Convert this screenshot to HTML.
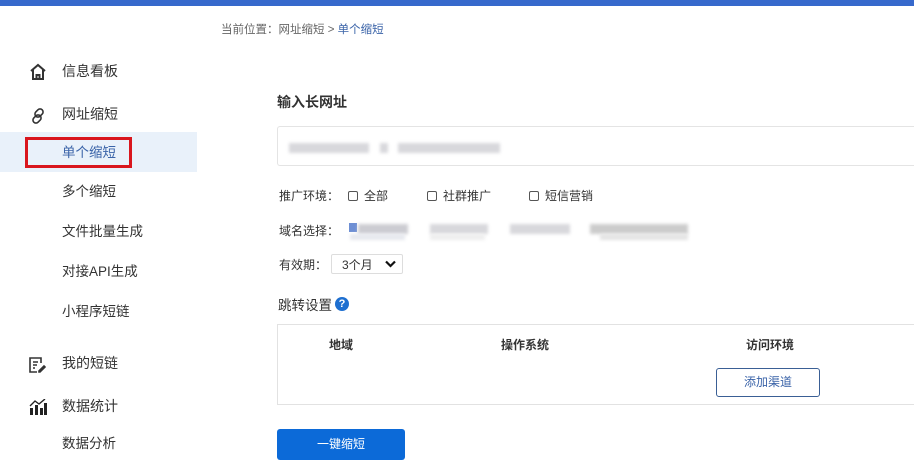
<!DOCTYPE html>
<html><head><meta charset="utf-8"><style>
*{margin:0;padding:0;box-sizing:border-box}
body{width:914px;height:476px;overflow:hidden;background:#fff;font-family:"Liberation Sans","Noto Sans CJK SC",sans-serif;color:#333;position:relative}
.a{position:absolute;white-space:nowrap}
.top{left:0;top:0;width:914px;height:6px;background:#3769cc}
.nav{font-size:14px;color:#333}
.sub{font-size:13.5px;color:#333}
.f{font-size:12px;color:#333}
.blur{position:absolute;height:10px;background:#d8d8dc;filter:blur(1.5px)}
.cb{display:inline-block;width:10px;height:10px;border:1px solid #555;border-radius:2px;vertical-align:-1px;margin-right:6px}
</style></head><body>
<div class="a top"></div>
<div class="a" style="left:221px;top:21px;font-size:11.5px;color:#666">当前位置：网址缩短 &gt; <span style="color:#3a63a8">单个缩短</span></div>

<svg class="a" style="left:29px;top:63px" width="18" height="18" viewBox="0 0 18 18"><path d="M2 8 L9 2 L16 8 M4 6.5 V16 H14 V6.5 M7.5 16 V12 H10.5 V16" fill="none" stroke="#333" stroke-width="2"/></svg>
<div class="a nav" style="left:62px;top:61px">信息看板</div>
<svg class="a" style="left:29px;top:107px" width="18" height="18" viewBox="0 0 18 18"><g fill="none" stroke="#333" stroke-width="1.6"><rect x="7" y="1.5" width="6" height="9" rx="3" transform="rotate(45 10 6)"/><rect x="5" y="7.5" width="6" height="9" rx="3" transform="rotate(45 8 12)"/></g></svg>
<div class="a nav" style="left:62px;top:104px">网址缩短</div>
<div class="a" style="left:0;top:132px;width:197px;height:40px;background:#e9f1fa"></div>
<div class="a" style="left:25px;top:137px;width:107px;height:31px;border:3px solid #d9161d"></div>
<div class="a sub" style="left:62px;top:141px;color:#3a63a8">单个缩短</div>
<div class="a sub" style="left:62px;top:180px">多个缩短</div>
<div class="a sub" style="left:62px;top:220px">文件批量生成</div>
<div class="a sub" style="left:62px;top:260px">对接API生成</div>
<div class="a sub" style="left:62px;top:300px">小程序短链</div>
<svg class="a" style="left:28px;top:356px" width="18" height="18" viewBox="0 0 18 18"><g fill="none" stroke="#333" stroke-width="1.6"><path d="M13 7 V2 H2 V16 H9"/><path d="M5 6 H10 M5 9 H9 M5 12 H7"/><path d="M11 15 L16 10 L17 11 L12 16 H11Z"/></g></svg>
<div class="a nav" style="left:62px;top:353px">我的短链</div>
<svg class="a" style="left:29px;top:399px" width="18" height="16" viewBox="0 0 18 16"><g fill="#222"><rect x="1" y="9" width="3" height="7"/><rect x="6" y="6" width="3" height="10"/><rect x="11" y="9" width="3" height="7"/><rect x="15" y="4" width="3" height="12"/></g><path d="M1 7 L6 2 L10 5 L16 0" stroke="#222" stroke-width="1.4" fill="none"/></svg>
<div class="a nav" style="left:62px;top:396px">数据统计</div>
<div class="a sub" style="left:62px;top:432px">数据分析</div>

<div class="a" style="left:277px;top:92px;font-size:14px;font-weight:bold;color:#333">输入长网址</div>
<div class="a" style="left:277px;top:126px;width:650px;height:40px;border:1px solid #e4e4e4;border-radius:3px;border-right:none"></div>
<div class="blur" style="left:289px;top:143px;width:80px"></div>
<div class="blur" style="left:380px;top:143px;width:8px"></div>
<div class="blur" style="left:398px;top:143px;width:102px"></div>

<div class="a f" style="left:279px;top:187px">推广环境：</div>
<div class="a f" style="left:348px;top:187px"><span class="cb"></span>全部</div>
<div class="a f" style="left:427px;top:187px"><span class="cb"></span>社群推广</div>
<div class="a f" style="left:529px;top:187px"><span class="cb"></span>短信营销</div>

<div class="a f" style="left:279px;top:222px">域名选择：</div>
<div class="a" style="left:349px;top:223px;width:8px;height:9px;background:#6e8fd4"></div>
<div class="blur" style="left:358px;top:224px;width:50px;background:#ccccd2"></div>
<div class="blur" style="left:350px;top:234px;width:55px;height:6px;background:#e6e8ee"></div>
<div class="blur" style="left:430px;top:224px;width:58px"></div>
<div class="blur" style="left:430px;top:234px;width:55px;height:6px;background:#eee"></div>
<div class="blur" style="left:510px;top:224px;width:60px"></div>
<div class="blur" style="left:590px;top:224px;width:98px;background:#ccc"></div>
<div class="blur" style="left:600px;top:234px;width:88px;height:6px;background:#e4e4e4"></div>

<div class="a f" style="left:279px;top:256px">有效期：</div>
<div class="a" style="left:331px;top:254px;width:72px;height:20px;border:1px solid #ddd;border-radius:2px;font-size:12px;padding:1px 0 0 10px">3个月</div>
<svg class="a" style="left:385px;top:260px" width="11" height="8" viewBox="0 0 11 8"><path d="M1 1.5 L5.5 6 L10 1.5" stroke="#111" stroke-width="2.2" fill="none"/></svg>

<div class="a" style="left:278px;top:294px;font-size:13.5px;color:#333">跳转设置</div>
<div class="a" style="left:335px;top:297px;width:14px;height:14px;border-radius:50%;background:#1e6fd0;color:#fff;font-size:11px;font-weight:bold;text-align:center;line-height:14px">?</div>

<div class="a" style="left:277px;top:324px;width:650px;height:81px;border:1px solid #e2e2e2;border-right:none"></div>
<div class="a f" style="left:329px;top:336px;font-weight:bold">地域</div>
<div class="a f" style="left:501px;top:336px;font-weight:bold">操作系统</div>
<div class="a f" style="left:746px;top:336px;font-weight:bold">访问环境</div>
<div class="a" style="left:716px;top:368px;width:104px;height:29px;border:1px solid #3a5f95;border-radius:3px;color:#3a63a8;font-size:12px;text-align:center;line-height:27px">添加渠道</div>

<div class="a" style="left:277px;top:429px;width:128px;height:31px;background:#0c6ad8;border-radius:3px;color:#fff;font-size:12px;text-align:center;line-height:31px">一键缩短</div>
</body></html>
